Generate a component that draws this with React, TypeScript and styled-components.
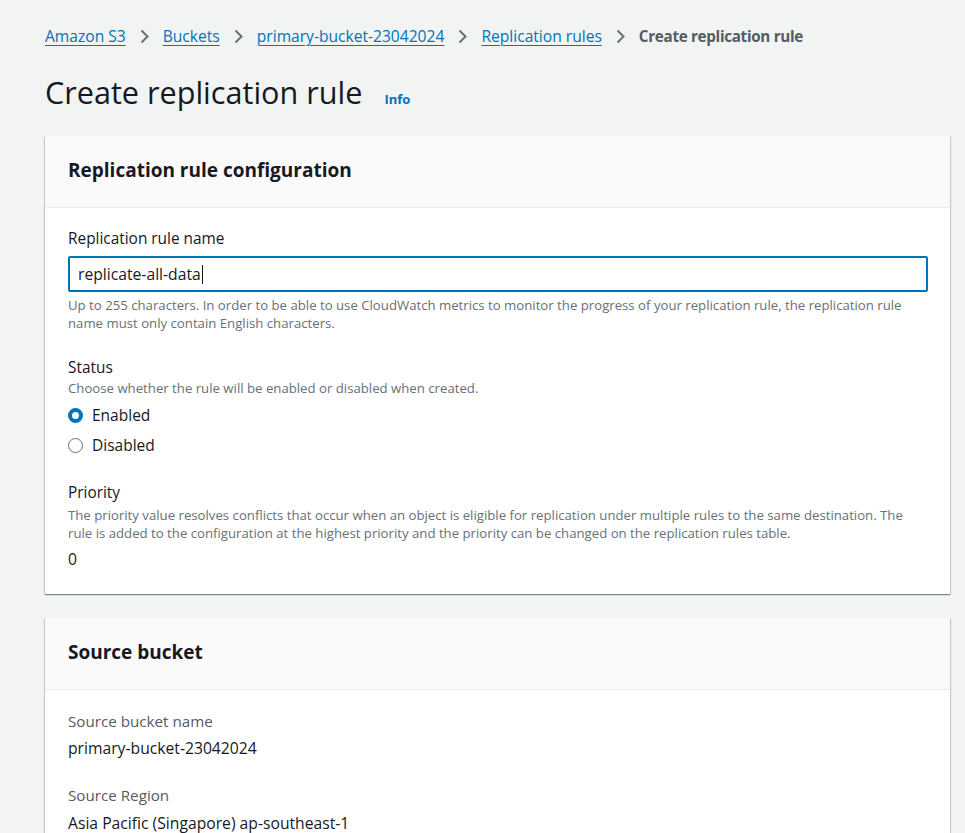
import React from "react";
import styled, { createGlobalStyle } from "styled-components";

const Global = createGlobalStyle`
  html, body { margin: 0; padding: 0; background: #f2f3f3; }
  body { font-family: "Open Sans", "Noto Sans", sans-serif; color: #16191f; }
  * { box-sizing: border-box; }
`;

const Page = styled.div`
  padding: 25px 15px 0 45px;
  display: flex;
  flex-direction: column;
`;

const Crumbs = styled.nav`
  display: flex;
  align-items: center;
  gap: 14px;
  font-size: 15.6px;
  line-height: 22px;
`;

const CrumbLink = styled.a`
  color: #0073bb;
  text-decoration: underline;
  text-underline-offset: 3px;
  text-decoration-thickness: 1px;
`;

const CrumbCurrent = styled.span`
  color: #545b64;
  font-weight: 700;
  font-size: 15.2px;
  letter-spacing: -0.3px;
`;

const Chevron = () => (
  <svg width="9" height="15" viewBox="0 0 9 15">
    <path d="M1.5 1.5 L7.5 7.5 L1.5 13.5" fill="none" stroke="#687078" strokeWidth="2" />
  </svg>
);

const TitleRow = styled.div`
  display: flex;
  align-items: baseline;
  gap: 22px;
  margin-top: 25px;
`;

const Title = styled.h1`
  margin: 0;
  font-size: 30.6px;
  font-weight: 400;
  line-height: 40px;
  color: #16191f;
`;

const Info = styled.a`
  color: #0073bb;
  font-weight: 700;
  font-size: 13px;
`;

const Panel = styled.section<{ $top: number }>`
  background: #fff;
  box-shadow: 0 1px 1px 0 rgba(0, 28, 36, 0.3), 1px 1px 1px 0 rgba(0, 28, 36, 0.15),
    -1px 1px 1px 0 rgba(0, 28, 36, 0.15);
  margin-top: ${(p) => p.$top}px;
`;

const PanelHeader = styled.header`
  background: #fafafa;
  border-bottom: 1px solid #eaeded;
  height: 72px;
  padding: 0 23px 3px;
  display: flex;
  align-items: center;
`;

const PanelTitle = styled.h2`
  margin: 0;
  font-size: 19px;
  font-weight: 700;
  line-height: 24px;
`;

const PanelBody = styled.div`
  padding: 20px 22px 24px 23px;
  display: flex;
  flex-direction: column;
`;

const Field = styled.div<{ $gap?: number }>`
  display: flex;
  flex-direction: column;
  margin-bottom: ${(p) => p.$gap ?? 0}px;
`;

const Label = styled.div`
  font-size: 15.4px;
  line-height: 22px;
  color: #16191f;
`;

const Desc = styled.div<{ $top?: number }>`
  font-size: 13.2px;
  line-height: 18px;
  color: #687078;
  margin-top: ${(p) => p.$top ?? 0}px;
`;

const Input = styled.div`
  margin-top: 6px;
  height: 36px;
  border: 2px solid #0073bb;
  border-radius: 2px;
  padding: 0 8px;
  display: flex;
  align-items: center;
  font-size: 15.7px;
  color: #16191f;
`;

const Caret = styled.span`
  display: inline-block;
  width: 1px;
  height: 19px;
  background: #16191f;
  margin-left: 1px;
`;

const RadioGroup = styled.div`
  display: flex;
  flex-direction: column;
  margin-top: 3px;
`;

const RadioRow = styled.label`
  display: flex;
  align-items: center;
  gap: 9px;
  height: 30px;
  font-size: 15.5px;
`;

const RadioDot = styled.span<{ $on?: boolean }>`
  width: 15px;
  height: 15px;
  border-radius: 50%;
  border: ${(p) => (p.$on ? "4.5px solid #0073bb" : "1.5px solid #687078")};
  background: #fff;
`;

const Value = styled.div<{ $top?: number }>`
  font-size: 15.7px;
  line-height: 22px;
  margin-top: ${(p) => p.$top ?? 0}px;
`;

const GrayLabel = styled.div`
  font-size: 15.2px;
  line-height: 22px;
  color: #545b64;
`;

export default function App() {
  return (
    <>
      <Global />
      <Page>
        <Crumbs>
          <CrumbLink>Amazon S3</CrumbLink>
          <Chevron />
          <CrumbLink>Buckets</CrumbLink>
          <Chevron />
          <CrumbLink>primary-bucket-23042024</CrumbLink>
          <Chevron />
          <CrumbLink>Replication rules</CrumbLink>
          <Chevron />
          <CrumbCurrent>Create replication rule</CrumbCurrent>
        </Crumbs>
        <TitleRow>
          <Title>Create replication rule</Title>
          <Info>Info</Info>
        </TitleRow>

        <Panel $top={24}>
          <PanelHeader>
            <PanelTitle>Replication rule configuration</PanelTitle>
          </PanelHeader>
          <PanelBody>
            <Field $gap={25}>
              <Label>Replication rule name</Label>
              <Input>
                replicate-all-data
                <Caret />
              </Input>
              <Desc $top={4}>
                Up to 255 characters. In order to be able to use CloudWatch metrics to monitor the
                progress of your replication rule, the replication rule name must only contain
                English characters.
              </Desc>
            </Field>
            <Field $gap={22}>
              <Label>Status</Label>
              <Desc>Choose whether the rule will be enabled or disabled when created.</Desc>
              <RadioGroup>
                <RadioRow>
                  <RadioDot $on />
                  Enabled
                </RadioRow>
                <RadioRow>
                  <RadioDot />
                  Disabled
                </RadioRow>
              </RadioGroup>
            </Field>
            <Field>
              <Label>Priority</Label>
              <Desc $top={2}>
                The priority value resolves conflicts that occur when an object is eligible for
                replication under multiple rules to the same destination. The rule is added to the
                configuration at the highest priority and the priority can be changed on the
                replication rules table.
              </Desc>
              <Value $top={6}>0</Value>
            </Field>
          </PanelBody>
        </Panel>

        <Panel $top={24}>
          <PanelHeader>
            <PanelTitle>Source bucket</PanelTitle>
          </PanelHeader>
          <PanelBody>
            <Field $gap={25}>
              <GrayLabel>Source bucket name</GrayLabel>
              <Value $top={5}>primary-bucket-23042024</Value>
            </Field>
            <Field>
              <GrayLabel>Source Region</GrayLabel>
              <Value $top={6}>Asia Pacific (Singapore) ap-southeast-1</Value>
            </Field>
          </PanelBody>
        </Panel>
      </Page>
    </>
  );
}
